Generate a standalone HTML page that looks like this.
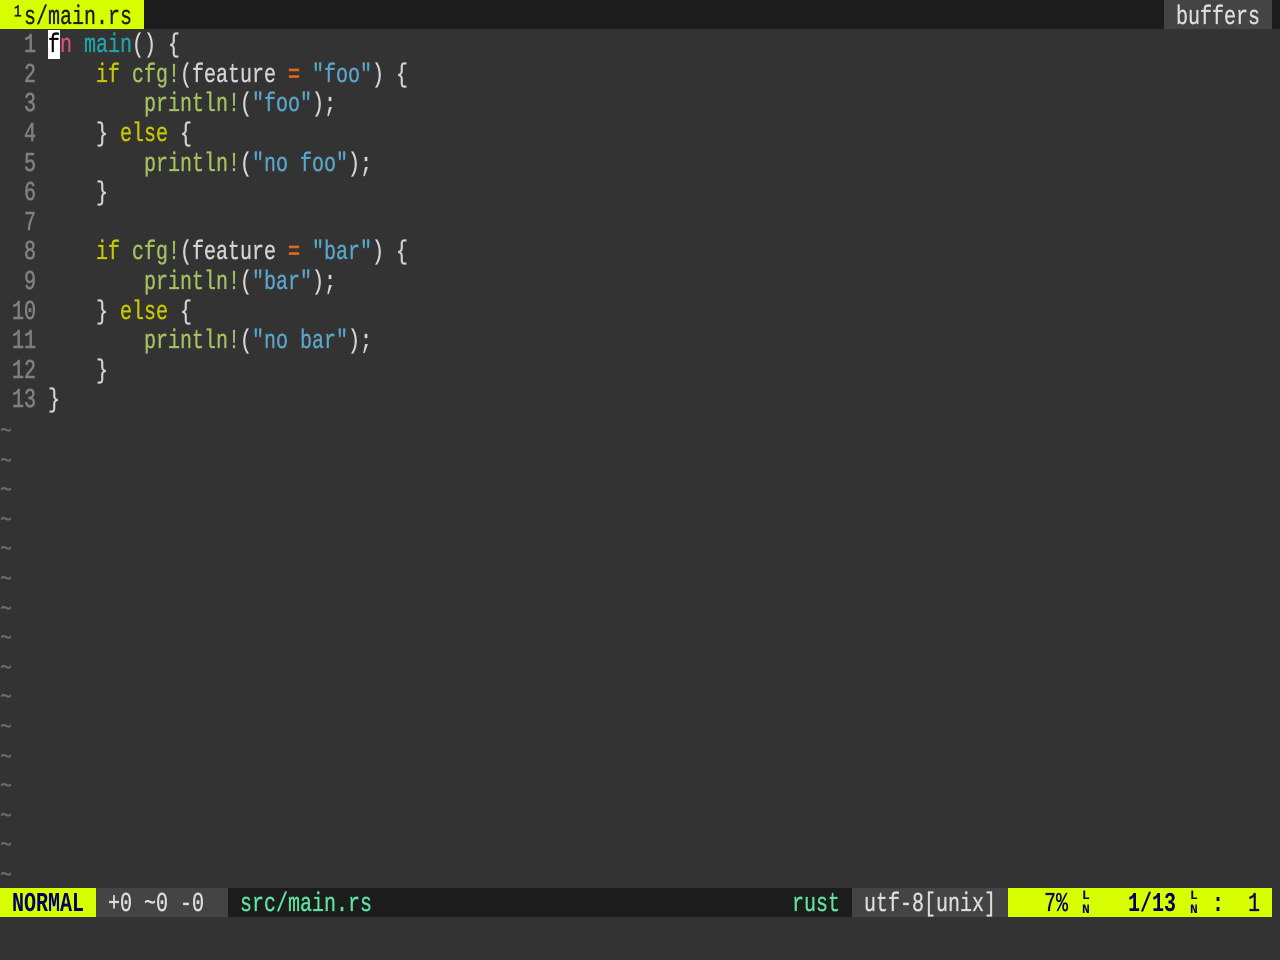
<!DOCTYPE html>
<html><head><meta charset="utf-8"><style>
html,body{margin:0;padding:0;width:1280px;height:960px;overflow:hidden;background:#333;}
.b{position:absolute;}
.r{position:absolute;left:0;margin-top:2px;width:1728px;height:30px;white-space:pre;font:27px/30px "Liberation Mono",monospace;color:#d4d4d4;transform:scaleX(.7407);transform-origin:0 0;-webkit-text-stroke:.35px currentColor;}
.u{margin-top:3px}
.n{color:#808080;-webkit-text-stroke:.6px #808080}.k{color:#c8c800}.m{color:#a5c261}.s{color:#5ba5c9}.o{color:#e2661a;-webkit-text-stroke:.7px #e2661a}.t{color:#1fa6a6}.f{color:#d9507f}
.c{color:#000}.tl{color:#6a6a6a;margin-top:4px}
.d{color:#00005f;font-weight:bold;-webkit-text-stroke:0}.g{color:#5fe3a1}
.sm{position:absolute;font:bold 13px/12px "Liberation Mono",monospace;color:#00005f;}
</style></head><body>
<div class="b" style="left:0;top:0;width:1280px;height:29px;background:#1c1c1c"></div>
<div class="b" style="left:0;top:0;width:144px;height:29px;background:#d7ff00"></div>
<div class="b" style="left:1164px;top:0;width:108px;height:29px;background:#444"></div>
<div class="r u" style="top:0;color:#1c1c1c"> ¹s/main.rs</div>
<div class="r u" style="top:0;left:1176px;color:#ddd">buffers</div>

<div class="b" style="left:48px;top:30px;width:12px;height:29px;background:#fff"></div>
<div class="r" style="top:29px"><span class="n">  1 </span><span class="c">f</span><span class="f">n</span> <span class="t">main</span>() {</div>
<div class="r" style="top:59px"><span class="n">  2 </span>    <span class="k">if</span> <span class="m">cfg!</span>(feature <span class="o">=</span> <span class="s">"foo"</span>) {</div>
<div class="r" style="top:88px"><span class="n">  3 </span>        <span class="m">println!</span>(<span class="s">"foo"</span>);</div>
<div class="r" style="top:118px"><span class="n">  4 </span>    } <span class="k">else</span> {</div>
<div class="r" style="top:148px"><span class="n">  5 </span>        <span class="m">println!</span>(<span class="s">"no foo"</span>);</div>
<div class="r" style="top:177px"><span class="n">  6 </span>    }</div>
<div class="r" style="top:207px"><span class="n">  7 </span></div>
<div class="r" style="top:236px"><span class="n">  8 </span>    <span class="k">if</span> <span class="m">cfg!</span>(feature <span class="o">=</span> <span class="s">"bar"</span>) {</div>
<div class="r" style="top:266px"><span class="n">  9 </span>        <span class="m">println!</span>(<span class="s">"bar"</span>);</div>
<div class="r" style="top:296px"><span class="n"> 10 </span>    } <span class="k">else</span> {</div>
<div class="r" style="top:325px"><span class="n"> 11 </span>        <span class="m">println!</span>(<span class="s">"no bar"</span>);</div>
<div class="r" style="top:355px"><span class="n"> 12 </span>    }</div>
<div class="r" style="top:384px"><span class="n"> 13 </span>}</div>

<div class="r tl" style="top:414px">~</div>
<div class="r tl" style="top:444px">~</div>
<div class="r tl" style="top:473px">~</div>
<div class="r tl" style="top:503px">~</div>
<div class="r tl" style="top:532px">~</div>
<div class="r tl" style="top:562px">~</div>
<div class="r tl" style="top:592px">~</div>
<div class="r tl" style="top:621px">~</div>
<div class="r tl" style="top:651px">~</div>
<div class="r tl" style="top:680px">~</div>
<div class="r tl" style="top:710px">~</div>
<div class="r tl" style="top:740px">~</div>
<div class="r tl" style="top:769px">~</div>
<div class="r tl" style="top:799px">~</div>
<div class="r tl" style="top:828px">~</div>
<div class="r tl" style="top:858px">~</div>

<div class="b" style="left:0;top:888px;width:96px;height:29px;background:#d7ff00"></div>
<div class="b" style="left:96px;top:888px;width:132px;height:29px;background:#444"></div>
<div class="b" style="left:228px;top:888px;width:624px;height:29px;background:#1c1c1c"></div>
<div class="b" style="left:852px;top:888px;width:156px;height:29px;background:#444"></div>
<div class="b" style="left:1008px;top:888px;width:264px;height:29px;background:#d7ff00"></div>

<div class="r d u" style="top:887px;left:12px">NORMAL</div>
<div class="r u" style="top:887px;left:108px;color:#ddd">+0 ~0 -0</div>
<div class="r g u" style="top:887px;left:240px">src/main.rs</div>
<div class="r g u" style="top:887px;left:792px">rust</div>
<div class="r u" style="top:887px;left:864px;color:#ddd">utf-8[unix]</div>
<div class="r u" style="top:887px;left:1044px;color:#00005f">7%</div>
<div class="sm" style="left:1082px;top:890px">L</div>
<div class="sm" style="left:1082px;top:904px">N</div>
<div class="r d u" style="top:887px;left:1128px">1/13</div>
<div class="sm" style="left:1190px;top:890px">L</div>
<div class="sm" style="left:1190px;top:904px">N</div>
<div class="r d u" style="top:887px;left:1212px">:</div>
<div class="r u" style="top:887px;left:1248px;color:#00005f">1</div>
</body></html>
